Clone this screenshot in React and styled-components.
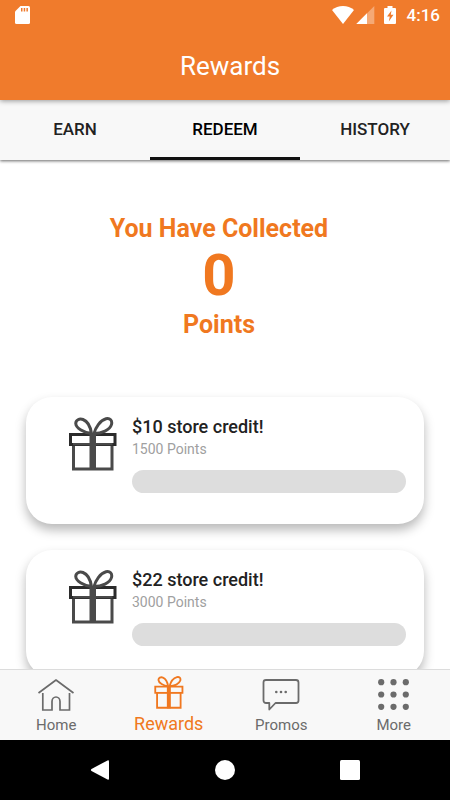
import React, { useState } from "react";
import styled, { createGlobalStyle, css } from "styled-components";

const colors = {
  brand: "#f07b2c",
  accent: "#f07820",
  bar: "#f8f8f8",
  track: "#dddddd",
  text: "#222222",
  muted: "#a0a0a0",
  icon: "#6b6b6b",
};

const GlobalStyle = createGlobalStyle`
  * {
    box-sizing: border-box;
  }
  body {
    margin: 0;
    background: #fff;
    font-family: Roboto, "Liberation Sans", sans-serif;
  }
  button {
    border: 0;
    padding: 0;
    background: none;
    font: inherit;
    cursor: pointer;
  }
`;

const Screen = styled.div`
  display: flex;
  flex-direction: column;
  height: 100vh;
  overflow: hidden;
`;

const Header = styled.header`
  position: relative;
  z-index: 2;
  flex: none;
  background: ${colors.brand};
  color: #fff;
  box-shadow: 0 1px 5px rgba(0, 0, 0, 0.4);
`;

const StatusBar = styled.div`
  display: flex;
  align-items: center;
  height: 30px;
  padding: 0 10px 0 15px;
`;

const StatusIcons = styled.div`
  display: flex;
  align-items: center;
  margin-left: auto;
`;

const Clock = styled.time`
  margin-left: 10px;
  font-size: 17px;
  font-weight: 500;
  line-height: 30px;
`;

const Title = styled.h1`
  margin: 0;
  padding: 19px 0 17px 10px;
  font-size: 26px;
  font-weight: 400;
  line-height: 34px;
  text-align: center;
`;

const Tabs = styled.div`
  position: relative;
  z-index: 1;
  display: flex;
  flex: none;
  background: ${colors.bar};
  box-shadow: 0 1px 3px rgba(0, 0, 0, 0.6);
`;

const Tab = styled.button`
  flex: 1;
  height: 60px;
  border-bottom: 3px solid ${(props) => (props.$active ? "#111" : "transparent")};
  color: ${(props) => (props.$active ? "#000" : colors.text)};
  font-size: 17px;
  font-weight: 500;
`;

const Content = styled.main`
  flex: 1;
  min-height: 0;
  overflow: hidden;
  padding: 53px 26px 0;
`;

const Summary = styled.section`
  padding-right: 12px;
  color: ${colors.accent};
  font-size: 25px;
  font-weight: 700;
  line-height: 32px;
  text-align: center;

  p {
    margin: 0;
  }
`;

const Total = styled.p`
  padding-bottom: 4px;
  font-size: 58px;
  line-height: 60px;
`;

const RewardList = styled.ul`
  display: flex;
  flex-direction: column;
  gap: 26px;
  margin: 56px 0 0;
  padding: 0;
  list-style: none;
`;

const Card = styled.li`
  display: flex;
  align-items: flex-start;
  gap: 15px;
  height: 127px;
  padding: 20px 18px 0 43px;
  border-radius: 26px;
  background: #fff;
  box-shadow: 0 6px 11px rgba(0, 0, 0, 0.28);
`;

const CardBody = styled.div`
  flex: 1;
`;

const CardTitle = styled.h2`
  margin: 0;
  color: ${colors.text};
  font-size: 18px;
  font-weight: 500;
  line-height: 20px;
`;

const CardCost = styled.p`
  margin: 3px 0 12px;
  color: ${colors.muted};
  font-size: 14px;
  font-weight: 400;
  line-height: 18px;
`;

const Progress = styled.div`
  height: 23px;
  border-radius: 12px;
  background: ${colors.track};
  overflow: hidden;
`;

const ProgressFill = styled.div`
  height: 100%;
  background: ${colors.accent};
`;

const BottomNav = styled.nav`
  position: relative;
  z-index: 1;
  display: flex;
  flex: none;
  height: 71px;
  border-top: 1px solid #dcdcdc;
  background: ${colors.bar};
`;

const NavIcon = styled.span`
  display: flex;
  align-items: center;
  justify-content: center;
  height: 36px;
`;

const NavItem = styled.button`
  display: flex;
  flex: 1;
  flex-direction: column;
  align-items: center;
  justify-content: flex-end;
  gap: 2px;
  padding-bottom: 5px;
  color: ${colors.icon};
  font-size: 15px;
  line-height: 20px;

  ${(props) =>
    props.$active &&
    css`
      padding-bottom: 6px;
      color: ${colors.accent};
      font-size: 18px;

      ${NavIcon} {
        align-items: flex-start;
      }
    `}
`;

const SystemBar = styled.div`
  display: flex;
  flex: none;
  align-items: center;
  justify-content: center;
  gap: 105px;
  height: 60px;
  background: #000;
`;

const SystemButton = styled.button`
  display: flex;
  color: #fff;
`;

function GiftIcon({ width, height, edge = "currentColor" }) {
  return (
    <svg width={width} height={height} viewBox="0 0 48 54" fill="none" stroke="currentColor" strokeWidth="3" aria-hidden="true">
      <path d="M4.500 28V52H43V28" />
      <path d="M1.500 17.500H46V27.500H1.500Z" stroke={edge} />
      <path d="M4 27.200H43.500" strokeWidth="2.200" />
      <path d="M20.500 16H27V53H20.500Z" fill="currentColor" stroke="none" />
      <path d="M22.500 16.500C15 16 7 11 6.800 6.800C6.500 3 10.500 1.200 14 2.500C18.500 4.200 21.500 10 22.500 16.500Z" />
      <path d="M25 16.500C26.500 10.500 31 3.500 37 1.800C41 .9 43.500 3.500 42.500 7.500C41 13 32.500 16.500 25 16.500Z" />
    </svg>
  );
}

function HomeIcon() {
  return (
    <svg width="38" height="34" viewBox="0 0 38 34" fill="none" stroke="currentColor" strokeWidth="1.700" aria-hidden="true">
      <path d="M1.500 15L19 2L36.500 15" strokeLinejoin="round" />
      <path d="M5.800 15V32H15V23.500A4 4.500 0 0 1 23 23.500V32H32.500V15" />
    </svg>
  );
}

function PromosIcon() {
  return (
    <svg width="38" height="34" viewBox="0 0 38 34" fill="none" stroke="currentColor" strokeWidth="1.800" strokeLinejoin="round" aria-hidden="true">
      <path d="M4 2H34A2.500 2.500 0 0 1 36.500 4.500V22.500A2.500 2.500 0 0 1 34 25H13.500L7.300 31.500V25H4A2.500 2.500 0 0 1 1.500 22.500V4.500A2.500 2.500 0 0 1 4 2Z" />
      <g fill="currentColor" stroke="none">
        <circle cx="14.300" cy="14" r="1.300" />
        <circle cx="19" cy="14" r="1.300" />
        <circle cx="23.700" cy="14" r="1.300" />
      </g>
    </svg>
  );
}

function MoreIcon() {
  const steps = [3.2, 15.5, 27.8];
  return (
    <svg width="31" height="34" viewBox="0 0 31 34" fill="currentColor" aria-hidden="true">
      {steps.map((y) => steps.map((x) => <circle key={`${x}-${y}`} cx={x} cy={y + 1} r="3.100" />))}
    </svg>
  );
}

function SdCardIcon() {
  return (
    <svg width="15" height="18" viewBox="0 0 15 18" aria-hidden="true">
      <path d="M5.500 0H13.500A1.500 1.500 0 0 1 15 1.500V16.500A1.500 1.500 0 0 1 13.500 18H1.500A1.500 1.500 0 0 1 0 16.500V5.500Z" fill="#fff" />
      <path d="M6 2H7.500V5.500H6ZM8.700 2H10.200V5.500H8.700ZM11.400 2H12.900V5.500H11.400Z" fill={colors.brand} />
    </svg>
  );
}

function SignalIcons() {
  return (
    <svg width="65" height="18" viewBox="0 0 65 18" fill="#fff" aria-hidden="true">
      <path d="M0 4C6-1.300 16-1.300 22 4L11 18Z" />
      <path d="M42.300 0V18H24.300Z" opacity="0.350" />
      <path d="M35 7.300V18H24.300Z" />
      <path d="M55.500 0H60.500V2H63A1 1 0 0 1 64 3V17A1 1 0 0 1 63 18H53A1 1 0 0 1 52 17V3A1 1 0 0 1 53 2H55.500Z" />
      <path d="M59.500 4.500L55 10.500H57.800L56.800 15.500L61.500 8.800H58.800Z" fill={colors.brand} />
    </svg>
  );
}

const tabs = ["EARN", "REDEEM", "HISTORY"];

const rewards = [
  { title: "$10 store credit!", cost: 1500 },
  { title: "$22 store credit!", cost: 3000 },
];

const navItems = [
  { label: "Home", icon: <HomeIcon /> },
  { label: "Rewards", icon: <GiftIcon width={30} height={33} /> },
  { label: "Promos", icon: <PromosIcon /> },
  { label: "More", icon: <MoreIcon /> },
];

const GiftBox = styled.div`
  display: flex;
  color: #4a4a4a;
`;

function RewardCard({ reward, points }) {
  const percent = Math.min(100, (points / reward.cost) * 100);
  return (
    <Card>
      <GiftBox>
        <GiftIcon width={48} height={54} edge="#2b2b2b" />
      </GiftBox>
      <CardBody>
        <CardTitle>{reward.title}</CardTitle>
        <CardCost>{reward.cost} Points</CardCost>
        <Progress role="progressbar" aria-label={reward.title} aria-valuenow={percent}>
          <ProgressFill style={{ width: `${percent}%` }} />
        </Progress>
      </CardBody>
    </Card>
  );
}

function App() {
  const [tab, setTab] = useState("REDEEM");
  const [page, setPage] = useState("Rewards");
  const points = 0;

  return (
    <Screen>
      <GlobalStyle />
      <Header>
        <StatusBar>
          <SdCardIcon />
          <StatusIcons>
            <SignalIcons />
            <Clock>4:16</Clock>
          </StatusIcons>
        </StatusBar>
        <Title>Rewards</Title>
      </Header>
      <Tabs role="tablist">
        {tabs.map((name) => (
          <Tab key={name} role="tab" aria-selected={tab === name} $active={tab === name} onClick={() => setTab(name)}>
            {name}
          </Tab>
        ))}
      </Tabs>
      <Content>
        <Summary>
          <p>You Have Collected</p>
          <Total>{points}</Total>
          <p>Points</p>
        </Summary>
        <RewardList>
          {rewards.map((reward) => (
            <RewardCard key={reward.title} reward={reward} points={points} />
          ))}
        </RewardList>
      </Content>
      <BottomNav>
        {navItems.map(({ label, icon }) => (
          <NavItem key={label} $active={page === label} onClick={() => setPage(label)}>
            <NavIcon>{icon}</NavIcon>
            {label}
          </NavItem>
        ))}
      </BottomNav>
      <SystemBar>
        <SystemButton aria-label="Back">
          <svg width="20" height="20" viewBox="0 0 20 20" fill="currentColor">
            <path d="M17.500 .4Q19 -.2 19 1.500V18.500Q19 20.200 17.500 19.600L1.500 11Q.3 10 1.500 9Z" />
          </svg>
        </SystemButton>
        <SystemButton aria-label="Home screen">
          <svg width="20" height="20" viewBox="0 0 20 20" fill="currentColor">
            <circle cx="10" cy="10" r="10" />
          </svg>
        </SystemButton>
        <SystemButton aria-label="Recent apps">
          <svg width="20" height="20" viewBox="0 0 20 20" fill="currentColor">
            <rect width="20" height="20" rx="1.500" />
          </svg>
        </SystemButton>
      </SystemBar>
    </Screen>
  );
}

export default App;
